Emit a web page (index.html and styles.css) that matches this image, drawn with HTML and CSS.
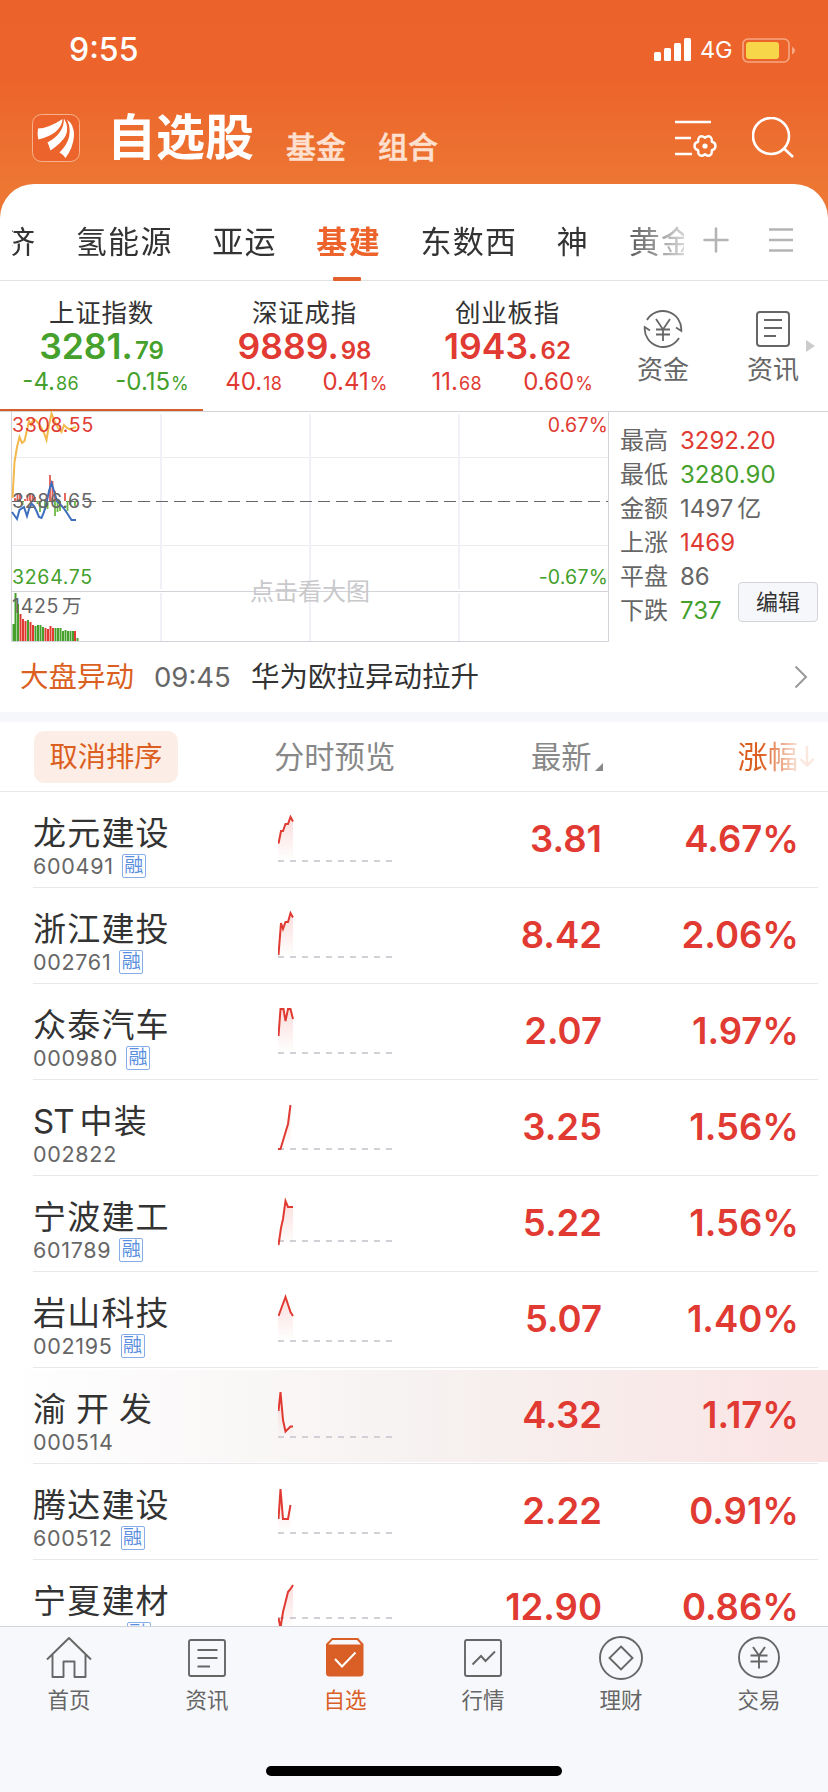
FILE: index.html
```html
<!doctype html>
<html lang="zh-CN">
<head>
    <meta charset="utf-8">
    <title>自选股</title>
    <link rel="stylesheet" href="styles.css">
</head>

<body>
<svg class="defs" width="0" height="0">
    <defs>
        <linearGradient id="fade" x1="0" y1="0" x2="0" y2="1">
            <stop offset="0" stop-color="#e03a32" stop-opacity=".17"/>
            <stop offset="1" stop-color="#e03a32" stop-opacity="0"/>
        </linearGradient>
    </defs>
</svg>
<div class="page">
    <div class="top">
        <div class="status">
            <span class="time">9:55</span>
            <svg class="signal" width="38" height="24" viewBox="0 0 38 24" fill="#fff">
                <rect x="0" y="14" width="7" height="9" rx="1.5"/>
                <rect x="10" y="10" width="7" height="13" rx="1.5"/>
                <rect x="20" y="5" width="7" height="18" rx="1.5"/>
                <rect x="30" y="0" width="7" height="23" rx="1.5"/>
            </svg>
            <span class="net">4G</span>
            <svg width="54" height="26" viewBox="0 0 54 26">
                <rect x="1" y="1" width="46" height="23" rx="5" fill="none" stroke="#f5a883" stroke-width="1.6"/>
                <rect x="4" y="4" width="33" height="17" rx="3" fill="#f8d649"/>
                <path d="M50 8.5q6 4 0 8z" fill="#f5a883"/>
            </svg>
        </div>
        <div class="header">
            <svg class="logo" width="48" height="48" viewBox="0 0 48 48">
                <rect x=".5" y=".5" width="47" height="47" rx="9" fill="#ec642b" stroke="#f6b08c"/>
                <g fill="#fff">
                    <path d="M6 14.5Q16 14.5 30.7 5Q29 20 6.3 25.5Q5 20 6 14.5z"/>
                    <path d="M32 4.5Q37.500 13 33.500 22Q30 28.500 18.500 36.500Q17 31.500 15.500 28.500Q32 19.500 32 4.500z"/>
                    <path d="M35 5.500Q42.500 11 42 22Q41 34 33.500 44Q32 41 27.500 38.500Q43 23 35 5.500z"/>
                </g>
            </svg>
            <h1>自选股</h1>
            <span class="sub">基金</span>
            <span class="sub">组合</span>
            <svg class="setting" width="43" height="40" viewBox="0 0 43 40" fill="none" stroke="#fff" stroke-width="2.6">
                <path d="M0 4H36M0 20H16M0 36H17"/>
                <path stroke-width="2.400" stroke-linejoin="round" d="M30 19.800Q33.800 16.800 36 19.500Q37 20.500 36.800 23.800Q40.500 24.500 40.500 28Q40.500 31.500 36.800 32.200Q37 35.500 36 36.500Q33.800 39.200 30 36.200Q26.200 39.200 24 36.500Q23 35.500 23.200 32.200Q19.500 31.500 19.500 28Q19.500 24.500 23.200 23.800Q23 20.500 24 19.500Q26.200 16.800 30 19.800z"/>
                <circle cx="30" cy="28" r="2.600" fill="#fff" stroke="none"/>
            </svg>
            <svg width="42" height="42" viewBox="0 0 42 42" fill="none" stroke="#fff" stroke-width="2.600">
                <circle cx="19" cy="19" r="18"/>
                <path d="M32 31.500L41 40"/>
            </svg>
        </div>
    </div>

    <div class="panel">
        <div class="tabs">
            <div class="tab-list">
                <span>济</span><span>氢能源</span><span>亚运</span><span class="on">基建</span><span>东数西</span><span>神</span><span>黄金</span>
            </div>
            <svg class="plus" width="26" height="26" viewBox="0 0 26 26" stroke="#b4b4b4" stroke-width="2.600" stroke-linecap="round"><path d="M1.500 13H24.500M13 1.500V24.500"/></svg>
            <svg class="menu" width="24" height="26" viewBox="0 0 24 26" stroke="#b4b4b4" stroke-width="2.600"><path d="M0 2.500H24M0 13H24M0 23.500H24"/></svg>
        </div>

        <div class="indexes">
            <div class="index on green">
                <div class="name">上证指数</div>
                <div class="value">3281.<small>79</small></div>
                <div class="change"><span>-4.<small>86</small></span><span>-0.15<small>%</small></span></div>
            </div>
            <div class="index red">
                <div class="name">深证成指</div>
                <div class="value">9889.<small>98</small></div>
                <div class="change"><span>40.<small>18</small></span><span>0.41<small>%</small></span></div>
            </div>
            <div class="index red">
                <div class="name">创业板指</div>
                <div class="value">1943.<small>62</small></div>
                <div class="change"><span>11.<small>68</small></span><span>0.60<small>%</small></span></div>
            </div>
            <div class="tool">
                <svg width="40" height="40" viewBox="0 0 40 40" fill="none" stroke="#666" stroke-width="1.800">
                    <path d="M4 11A18.500 18.500 0 0 1 38.300 22L33 18.500M36 29A18.500 18.500 0 0 1 1.700 18L7 21.500"/>
                    <path d="M13 10L20 20.500L27 10M20 20V32M13 20.500H27M13 25.500H27"/>
                </svg>
                <span>资金</span>
            </div>
            <div class="tool last">
                <svg width="40" height="40" viewBox="0 0 40 40" fill="none" stroke="#666" stroke-width="2">
                    <rect x="4" y="3" width="32" height="34" rx="3"/>
                    <path d="M11 11H29M11 19H29M11 27H23"/>
                </svg>
                <span>资讯</span>
            </div>
            <svg class="more" width="9" height="12" viewBox="0 0 9 12"><path d="M0 0L9 6L0 12z" fill="#ccc"/></svg>
        </div>

        <div class="market">
            <svg class="chart" width="610" height="231" viewBox="0 0 610 231">
                <g fill="none" stroke="#ececf0">
                    <path d="M12 46.500H608M12 134.500H608"/>
                    <path stroke="#f0f0f7" stroke-width="2" d="M161 3V178M310 3V178M459 3V178M161 182V230M310 182V230M459 182V230"/>
                    <path stroke="#d2d2d8" d="M11.500 0.500H608.500V230.500H11.500zM12 180.500H608"/>
                </g>
                <path d="M12 90.500H608" stroke="#666" stroke-dasharray="12 6" fill="none"/>
                <path stroke="#e05a50" stroke-width="1.800" fill="none" d="M15 90V87M17.500 90V83M20 90V82M25 90V88M27.500 90V84M30 90V82M32.500 90V84M35 90V86M50 90V64M52.500 90V70M55 90V80M65 90V82"/>
                <path stroke="#6cb845" stroke-width="1.800" fill="none" d="M22.500 90V94M37.500 90V93M40 90V101M45 90V99M47.500 90V98M55 90V105M57.500 90V101M60 90V100M67.500 90V100M70 90V94M75 90V95"/>
                <path stroke="#f3b94c" stroke-width="2" fill="none" d="M12.500 87L14.500 51L17 36L19.500 26L22 32L24.500 30L27 19L29 10L31 14L33.500 8L36.500 10L39 13L41.500 17L44 22L46.500 29L49 14L51.500 2.500L55 11L58 17L61.500 21L64 14L67 17L70 18.500L73 17L76 16"/>
                <path stroke="#3d6fbe" stroke-width="2" fill="none" d="M12 101L17 108L19.500 99L24 96L27 105L29 98L31.500 92.500L34 95L36.500 100L39 106L41.500 107L44 101L46.500 92L49 80L51.500 72L54 80L57 90L60 93L63.500 97L67 102L71.500 109H76"/>
                <path stroke="#45a02c" stroke-width="2" fill="none" d="M13.500 230V213M15.500 230V182M18 230V193M28 230V209M35.500 230V215M38 230V214M40.500 230V214M43 230V216M55.500 230V217M58 230V217M60.500 230V217M63 230V220M65.500 230V219M68 230V220M70.500 230V220M73 230V220M77.500 230V227"/>
                <path stroke="#e03a32" stroke-width="2" fill="none" d="M20.500 230V203M23 230V208M25.500 230V210M30.500 230V211M33 230V214M45.500 230V217M48 230V218M50.500 230V215M53 230V217M75 230V220"/>
                <g class="labels">
                    <text x="12" y="21" class="red">3308.55</text>
                    <text x="12" y="97">3286.65</text>
                    <text x="12" y="173" class="green">3264.75</text>
                    <text x="12" y="202">1425<tspan dx="3">万</tspan></text>
                    <text x="608" y="21" class="red end">0.67%</text>
                    <text x="608" y="173" class="green end">-0.67%</text>
                </g>
                <text x="250" y="189" class="mark">点击看大图</text>
            </svg>
            <div class="stats">
                <div><b>最高</b><span class="red">3292.20</span></div>
                <div><b>最低</b><span class="green">3280.90</span></div>
                <div><b>金额</b><span>1497<i>亿</i></span></div>
                <div><b>上涨</b><span class="red">1469</span></div>
                <div><b>平盘</b><span>86</span></div>
                <div><b>下跌</b><span class="green">737</span></div>
                <a class="edit">编辑</a>
            </div>
        </div>

        <div class="news">
            <span class="tag">大盘异动</span>
            <span class="clock">09:45</span>
            <span class="text">华为欧拉异动拉升</span>
            <svg width="14" height="24" viewBox="0 0 14 24" fill="none" stroke="#999" stroke-width="2"><path d="M1.500 1.500L12 12L1.500 22.500"/></svg>
        </div>

        <div class="list-head">
            <a class="cancel">取消排序</a>
            <span class="preview">分时预览</span>
            <span class="latest">最新<svg width="8" height="8" viewBox="0 0 8 8"><path d="M8 0V8H0z" fill="#888"/></svg></span>
            <span class="rise">涨幅<svg width="16" height="24" viewBox="0 0 16 24" fill="none" stroke="#dc5f22" stroke-width="2.400"><path d="M8 1V20M1.500 14L8 20.500L14.500 14"/></svg></span>
        </div>

        <div class="list">
            <div class="row">
                <div class="stock"><div class="name">龙元建设</div><div class="code">600491<em>融</em></div></div>
                <svg class="spark" width="116" height="80" viewBox="0 0 116 80">
                    <path class="base" d="M0 69H116"/>
                    <path class="area" d="M0 51L3 39H5L7.500 32H10L12.500 25L15 29V69H0z"/>
                    <path class="line" d="M.5 51.500L3 39H5L7.500 32H10L12.500 25L15 29.500"/>
                </svg>
                <div class="price">3.81</div><div class="rate">4.67%</div>
            </div>
            <div class="row">
                <div class="stock"><div class="name">浙江建投</div><div class="code">002761<em>融</em></div></div>
                <svg class="spark" width="116" height="80" viewBox="0 0 116 80">
                    <path class="base" d="M0 69H116"/>
                    <path class="area" d="M0 67L3 35L5 41L7.500 34H10L12.500 25L15 29V69H0z"/>
                    <path class="line" d="M.5 67L3 35L5 41L7.500 34H10L12.500 25L15 29.500"/>
                </svg>
                <div class="price">8.42</div><div class="rate">2.06%</div>
            </div>
            <div class="row">
                <div class="stock"><div class="name">众泰汽车</div><div class="code">000980<em>融</em></div></div>
                <svg class="spark" width="116" height="80" viewBox="0 0 116 80">
                    <path class="base" d="M0 69H116"/>
                    <path class="area" d="M0 52L2.500 25H5.500L7.500 37L10 25H12.500L15 35V69H0z"/>
                    <path class="line" d="M.5 52L2.500 25H5.500L7.500 37L10 25H12.500L15 35"/>
                </svg>
                <div class="price">2.07</div><div class="rate">1.97%</div>
            </div>
            <div class="row">
                <div class="stock"><div class="name"><span>ST</span><i>中装</i></div><div class="code">002822</div></div>
                <svg class="spark" width="116" height="80" viewBox="0 0 116 80">
                    <path class="base" d="M0 69H116"/>
                    <path class="area" d="M3 69L10 44L12.500 25V69z"/>
                    <path class="line" d="M0 69H2.500L10 44L12.500 25"/>
                </svg>
                <div class="price">3.25</div><div class="rate">1.56%</div>
            </div>
            <div class="row">
                <div class="stock"><div class="name">宁波建工</div><div class="code">601789<em>融</em></div></div>
                <svg class="spark" width="116" height="80" viewBox="0 0 116 80">
                    <path class="base" d="M0 65H116"/>
                    <path class="area" d="M0 69L3 52L5 43L7.500 25L10 31H15V70H0z"/>
                    <path class="line" d="M.5 69L3 52L5 43L7.500 25L10 31H15"/>
                </svg>
                <div class="price">5.22</div><div class="rate">1.56%</div>
            </div>
            <div class="row">
                <div class="stock"><div class="name">岩山科技</div><div class="code">002195<em>融</em></div></div>
                <svg class="spark" width="116" height="80" viewBox="0 0 116 80">
                    <path class="base" d="M0 69H116"/>
                    <path class="area" d="M0 44L7.500 25L12.500 40L15 44V69H0z"/>
                    <path class="line" d="M.5 44L7.500 25L12.500 40L15 44"/>
                </svg>
                <div class="price">5.07</div><div class="rate">1.40%</div>
            </div>
            <div class="row flash">
                <div class="stock"><div class="name wide">渝开发</div><div class="code">000514</div></div>
                <svg class="spark" width="116" height="80" viewBox="0 0 116 80">
                    <path class="base" d="M0 69H116"/>
                    <path class="area" d="M0 43L2.500 24L5 52L7.500 64L12.500 58H15V69H0z"/>
                    <path class="line" d="M.5 43L2.500 24L5 52L7.500 63.500L12.500 58.500H15"/>
                </svg>
                <div class="price">4.32</div><div class="rate">1.17%</div>
            </div>
            <div class="row">
                <div class="stock"><div class="name">腾达建设</div><div class="code">600512<em>融</em></div></div>
                <svg class="spark" width="116" height="80" viewBox="0 0 116 80">
                    <path class="base" d="M0 69H116"/>
                    <path class="area" d="M0 55L2.500 25L5 55H10L12.500 41V69H0z"/>
                    <path class="line" d="M.5 55L2.500 25L5 55H10L12.500 41"/>
                </svg>
                <div class="price">2.22</div><div class="rate">0.91%</div>
            </div>
            <div class="row">
                <div class="stock"><div class="name">宁夏建材</div><div class="code">600449<em>融</em></div></div>
                <svg class="spark" width="116" height="80" viewBox="0 0 116 80">
                    <path class="base" d="M0 58H116"/>
                    <path class="area" d="M0 58L2.500 68L5 52L10 32L15 25V69H0z"/>
                    <path class="line" d="M.5 58L2.500 68L5 52L10 32L12.500 29L15 25"/>
                </svg>
                <div class="price">12.90</div><div class="rate">0.86%</div>
            </div>
        </div>
    </div>

    <div class="bar">
        <div class="item">
            <svg width="46" height="46" viewBox="0 0 46 46" fill="none" stroke="#666" stroke-width="1.900" stroke-linejoin="round"><path d="M1 24.500L23 3L45 24.500M6.500 19V42H17.500V26.500H28.500V42H39.500V19"/></svg>
            <span>首页</span>
        </div>
        <div class="item">
            <svg width="46" height="46" viewBox="0 0 46 46" fill="none" stroke="#666" stroke-width="1.900"><rect x="5" y="5" width="36" height="36" rx="2"/><path d="M13.500 15H33.500M13.500 23H33.500M13.500 31.500H26"/></svg>
            <span>资讯</span>
        </div>
        <div class="item on">
            <svg width="46" height="46" viewBox="0 0 46 46"><path d="M10 3H36L41.500 9V38Q41.500 41.500 38 41.500H7.500Q4 41.500 4 38V9z" fill="#da5f27"/><path d="M6.500 9.500L10.500 5H35L39 9.500z" fill="#f7f8fb"/><path d="M13 24L20 31.500L33.500 17.500" fill="none" stroke="#fff" stroke-width="2"/></svg>
            <span>自选</span>
        </div>
        <div class="item">
            <svg width="46" height="46" viewBox="0 0 46 46" fill="none" stroke="#666" stroke-width="1.900"><rect x="5" y="5" width="36" height="36" rx="2"/><path d="M12.500 29.500L21 21L25.500 26L35 16.500"/></svg>
            <span>行情</span>
        </div>
        <div class="item">
            <svg width="46" height="46" viewBox="0 0 46 46" fill="none" stroke="#666" stroke-width="1.900"><circle cx="23" cy="23" r="21"/><path d="M23 11.500L34.500 23L23 34.500L11.500 23z"/></svg>
            <span>理财</span>
        </div>
        <div class="item">
            <svg width="46" height="46" viewBox="0 0 46 46" fill="none" stroke="#666" stroke-width="1.900"><circle cx="23" cy="22.500" r="20"/><path d="M17 12L23 20.500L29 12M23 20V33.500M14.500 20.500H31.500M14.500 26.500H31.500"/></svg>
            <span>交易</span>
        </div>
        <div class="home"></div>
    </div>
</div>
</body>

</html>
```
FILE: styles.css
```css
* {box-sizing: border-box;}
body {margin: 0; font-family: Inter, 'Noto Sans CJK SC', sans-serif; color: #333; background: #fff;}
svg {display: block; flex: none;}
i, em {font-style: normal;}
.defs {position: absolute;}
.red {color: #e03a32; fill: #e03a32;}
.green {color: #45a02c; fill: #45a02c;}
.page {width: 828px; height: 1792px; overflow: hidden; display: flex; flex-direction: column; background: linear-gradient(#ec622b 0, #ec642b 80px, #ed7633 184px, #ec7834 230px);}

.top {height: 184px; flex: none; color: #fff;}
.status {height: 94px; padding: 6px 32px 0 69px; display: flex; align-items: center;}
.time {flex: 1; font-size: 32px; font-weight: 500; line-height: 40px;}
.net {width: 50px; padding-left: 8px; font-size: 23.500px; line-height: 30px; letter-spacing: -.3px; white-space: nowrap;}
.status svg:last-child {margin-top: 1px;}
.header {height: 90px; padding: 0 34px 0 32px; display: flex; align-items: flex-start;}
.logo {margin-top: 20px;}
h1 {margin: 17px 0 0 27px; width: 148px; font-size: 49px; line-height: 54px; font-weight: 700; white-space: nowrap;}
.sub {margin: 35px 0 0 32px; font-size: 30px; line-height: 36px; font-weight: 500; color: #fde0cf; -webkit-text-stroke: .5px #fde0cf;}
.header .sub:nth-of-type(1) {margin-left: 31px;}
.header .setting {margin: 24px 34px 0 auto;}
.header svg:last-child {margin: 23px 0 0;}

.panel {flex: 1; min-height: 0; background: #fff; border-radius: 34px 34px 0 0; overflow: hidden;}
.tabs {height: 97px; border-bottom: 1px solid #e2e2e2; padding: 0 35px 0 12px; display: flex; align-items: center;}
.tab-list {width: 672px; height: 97px; display: flex; gap: 39.500px; overflow: hidden; -webkit-mask: linear-gradient(90deg, #000 600px, transparent 690px); mask: linear-gradient(90deg, #000 600px, transparent 690px);}
.tab-list span {position: relative; flex: none; font-size: 31px; letter-spacing: 1.300px; line-height: 44px; padding-top: 36px;}
.tab-list span:first-child {margin-left: -8px;}
.tab-list .on {color: #ec642b; font-weight: 700;}
.tab-list .on::after {content: ''; position: absolute; left: 17px; top: 93px; width: 28px; height: 4px; border-radius: 1px; background: #e4602a;}
.plus {margin: 16px 0 0 19px;}
.menu {margin: 16px 0 0 auto;}

.indexes {position: relative; height: 130px; display: flex;}
.index {width: 203px; height: 130px; text-align: center; padding-top: 16px;}
.index.on {border-bottom: 2px solid #d65f28;}
.index .name {color: #333; font-size: 25.500px; letter-spacing: .7px; line-height: 32px;}
.value {font-size: 35.500px; font-weight: 600; line-height: 36px; white-space: nowrap;}
.value small {font-size: 24px; margin-left: 2px;}
.change {display: flex; margin-top: -3px; font-size: 24px; line-height: 32px;}
.change span {flex: 1; white-space: nowrap;}
.change small {font-size: 18px; margin-left: 1px; letter-spacing: .4px;}
.tool {width: 110px; margin-left: -1px; padding-top: 28px; display: flex; flex-direction: column; align-items: center; font-size: 26px; line-height: 36px; color: #666;}
.tool span {margin-top: 3px;}
.tool.last {margin-left: 0;}
.more {position: absolute; right: 13px; top: 59px;}

.market {position: relative; height: 231px; display: flex; border-top: 1px solid #d2d2d8;}
.chart {margin-top: -1px;}
.labels text {font-size: 19.500px; letter-spacing: .7px; fill: #666;}
.labels .red {fill: #e03a32;}
.labels .green {fill: #45a02c;}
.labels .end {text-anchor: end; letter-spacing: .2px;}
.mark {font-size: 24px; fill: #c9c9cc;}
.stats {flex: 1; padding: 12px 0 0 10px; font-size: 24px; color: #666;}
.stats div {display: flex; height: 34px; line-height: 34px;}
.stats b {width: 60px; font-weight: 400;}
.stats i {margin-left: 4px;}
.edit {position: absolute; left: 738px; top: 170px; width: 80px; height: 40px; border: 1px solid #d3d4db; border-radius: 4px; background: #f6f7fa; color: #333; font-size: 22px; line-height: 38px; text-align: center;}

.news {height: 70px; padding: 0 20px 0 20px; display: flex; align-items: center; font-size: 28.500px; line-height: 40px;}
.tag {color: #dc5f22; width: 134px;}
.clock {color: #666; font-size: 27.500px; width: 97px;}
.news svg {margin-left: auto;}
.list-head {height: 80px; border-top: 10px solid #f6f7fa; border-bottom: 1px solid #e8e8e8; display: flex; align-items: center; font-size: 30.300px; line-height: 40px; color: #888;}
.cancel {margin-left: 34px; width: 144px; height: 52px; border-radius: 10px; background: #fceee6; color: #dc5f22; font-size: 28.300px; line-height: 52px; text-align: center;}
.preview {margin-left: 96px; width: 257px;}
.latest {display: flex; align-items: flex-end;}
.latest svg {margin: 0 0 6px 3px;}
.rise {margin-left: auto; margin-right: 13px; color: #dc5f22; display: flex; align-items: center; -webkit-mask: linear-gradient(90deg, #000 24px, rgba(0,0,0,.15) 62px); mask: linear-gradient(90deg, #000 24px, rgba(0,0,0,.15) 62px);}
.rise svg {margin-left: 1px;}

.row {height: 96px; display: flex; position: relative; padding-right: 29px;}
.row::after {content: ''; position: absolute; left: 33px; right: 10px; bottom: 0; height: 1px; background: #e8e8ea;}
.flash {background: linear-gradient(90deg, #fff 0, #f6f2f1 50%, #fae5e5 95%) 0 2px / 100% 92px no-repeat;}
.stock {width: 278px; padding: 18px 0 0 33px;}
.stock .name {font-size: 33px; letter-spacing: 1.200px; line-height: 46px;}
.stock .name.wide {letter-spacing: 10px;}
.stock .name span {letter-spacing: -1px;}
.stock .name i {margin-left: 6px;}
.code {display: flex; align-items: center; height: 24px; margin-top: -2px; font-size: 21.500px; letter-spacing: .7px; line-height: 24px; color: #666;}
.code em {width: 24px; height: 24px; margin-left: 8px; border: 1px solid #86ade8; border-radius: 2px; font-size: 19px; line-height: 21px; text-align: center; letter-spacing: 0; color: #5a8fdf;}
.base {stroke: #d0d0d6; stroke-width: 2; stroke-dasharray: 6 6;}
.area {fill: url(#fade);}
.line {fill: none; stroke: #e03a32; stroke-width: 2;}
.price, .rate {font-size: 36.500px; line-height: 44px; padding-top: 25px; font-weight: 600; color: #e03a32; text-align: right;}
.price {width: 208px;}
.rate {flex: 1;}

.bar {position: relative; height: 166px; flex: none; border-top: 1px solid #d3d4db; background: #f7f8fb; display: flex; padding-top: 8px;}
.item {width: 138px; display: flex; flex-direction: column; align-items: center; font-size: 21.500px; line-height: 30px; color: #666;}
.item span {margin-top: 4px;}
.item.on {color: #da5f27;}
.home {position: absolute; left: 266px; top: 139px; width: 296px; height: 10px; border-radius: 5px; background: #000;}
```
